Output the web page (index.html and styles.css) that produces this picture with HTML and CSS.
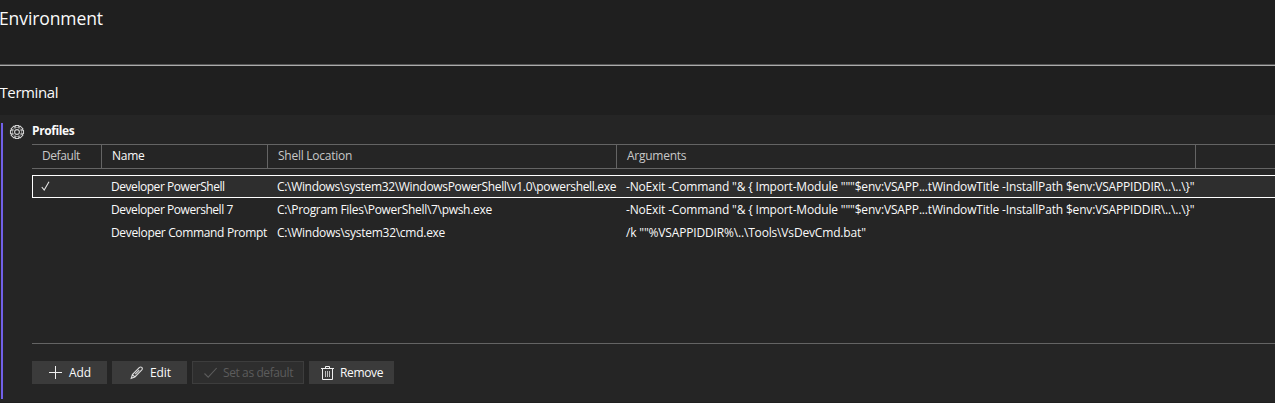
FILE: index.html
```
<!DOCTYPE html>
<html lang="en">
<head>
<meta charset="utf-8">
<title>Environment – Terminal</title>
<link rel="stylesheet" href="styles.css">
</head>
<body>
<header class="page-head"><h1><span>Environment</span></h1></header>
<h2 class="section-title"><span>Terminal</span></h2>
<main class="panel">
  <div class="accent"></div>
  <svg class="gear" viewBox="0 0 16 16" fill="none" stroke="#d2d2d2" stroke-width="1.100">
    <circle cx="8" cy="8" r="2.400"/>
    <path d="M6.200 3.600V1.500h3.600v2.100l1.500-1.400 2.500 2.500-1.400 1.500h2.100v3.600h-2.100l1.400 1.500-2.500 2.500-1.500-1.400v2.100H6.200v-2.100l-1.500 1.400-2.500-2.500 1.400-1.500H1.500V6.200h2.100L2.200 4.700l2.500-2.500z"/>
    <circle cx="8" cy="8" r="4.700" stroke-width=".8" stroke="#a8a8a8"/>
  </svg>
  <section class="profiles">
    <h3><span class="t-profiles">Profiles</span></h3>
    <div class="grid">
      <div class="row head">
        <div class="cell"><span class="t-default">Default</span></div>
        <div class="cell sorted"><span class="t-name">Name</span></div>
        <div class="cell"><span class="t-shell">Shell Location</span></div>
        <div class="cell"><span class="t-args">Arguments</span></div>
      </div>
      <div class="body">
        <div class="row selected">
          <div class="cell"><svg class="tick" viewBox="0 0 10 10" fill="none" stroke="#e4e4e4" stroke-width="1.100"><path d="M.8 6l2.400 3L8 .7"/></svg></div>
          <div class="cell"><span class="t-ps">Developer PowerShell</span></div>
          <div class="cell"><span class="t-path1">C:\Windows\system32\WindowsPowerShell\v1.0\powershell.exe</span></div>
          <div class="cell"><span class="t-cmd">-NoExit -Command "&amp; { Import-Module """$env:VSAPP...tWindowTitle -InstallPath $env:VSAPPIDDIR\..\..\}"</span></div>
        </div>
        <div class="row">
          <div class="cell"></div>
          <div class="cell"><span class="t-ps">Developer Powershell 7</span></div>
          <div class="cell"><span class="t-path2">C:\Program Files\PowerShell\7\pwsh.exe</span></div>
          <div class="cell"><span class="t-cmd">-NoExit -Command "&amp; { Import-Module """$env:VSAPP...tWindowTitle -InstallPath $env:VSAPPIDDIR\..\..\}"</span></div>
        </div>
        <div class="row">
          <div class="cell"></div>
          <div class="cell"><span class="t-prompt">Developer Command Prompt</span></div>
          <div class="cell"><span class="t-path3">C:\Windows\system32\cmd.exe</span></div>
          <div class="cell"><span class="t-cmd">/k ""%VSAPPIDDIR%\..\Tools\VsDevCmd.bat"</span></div>
        </div>
      </div>
    </div>
    <div class="actions">
      <button class="btn add"><svg viewBox="0 0 14 14" fill="none" stroke="#f0f0f0"><path d="M6.500 0v13M0 6.500h13"/></svg><span>Add</span></button>
      <button class="btn edit"><svg viewBox="0 0 14 14" fill="none" stroke="#dcdcdc" stroke-width="1.100"><path d="M1.200 12.300l1.200-3.700L9.500 1.500a1.500 1.500 0 0 1 2.300 0 1.500 1.500 0 0 1 0 2.300L4.900 11zM2.400 8.600L4.900 11M5.200 8.200l4-4"/></svg><span>Edit</span></button>
      <button class="btn set" disabled><svg viewBox="0 0 14 14" fill="none" stroke="#5c5c5c" stroke-width="1.100"><path d="M.5 7.500l3.700 3.700L12.700 2"/></svg><span>Set as default</span></button>
      <button class="btn remove"><svg viewBox="0 0 14 14" fill="none" stroke="#f0f0f0"><path d="M0 2.500h13M4.500 2.500v-2h4v2M1.500 2.500v11h10v-11"/><path d="M4.500 5v6M6.500 5v6M8.500 5v6" stroke="#bdbdbd"/></svg><span>Remove</span></button>
    </div>
  </section>
</main>
</body>
</html>
```
FILE: styles.css
```
* { box-sizing: border-box; }
body {
  margin: 0;
  height: 403px;
  overflow: hidden;
  display: flex;
  flex-direction: column;
  background: #1f1f1f;
  color: #fafafa;
  font: 12px/16px "Open Sans", "Noto Sans", sans-serif;
  white-space: nowrap;
}
h1, h2, h3 { margin: 0; font-weight: 400; }
.page-head {
  height: 66px;
  flex: none;
  padding-top: 6px;
  border-bottom: 1px solid #ababab;
  box-shadow: inset 0 -1px #565656;
}
h1 { font-size: 17.5px; line-height: 24px; letter-spacing: -.1px; text-indent: -1px; }
.section-title { height: 49px; flex: none; padding-top: 16px; font-size: 15px; line-height: 20px; letter-spacing: -.4px; text-indent: -.5px; }
.panel { flex: 1; min-height: 0; display: flex; background: #252525; border-bottom: 1px solid #1f1f1f; }
.accent { width: 2px; height: 276px; margin: 8px 0 0 1px; background: #7160e8; }
.gear { width: 16px; height: 16px; margin: 9px 7px 0 6px; flex: none; }
.profiles { flex: 1; min-width: 0; }
h3 { height: 29px; padding-top: 8px; font-weight: 700; font-size: 12px; line-height: 16px; }
.grid { height: 200px; border-top: 1px solid #646464; border-bottom: 1px solid #646464; overflow: hidden; }
.row { display: grid; grid-template-columns: 70px 166px 349px 579px 1fr; }
.head { height: 24px; border-bottom: 1px solid #646464; color: #c8c8c8; }
.head .cell { border-right: 1px solid #646464; padding: 3px 0 0 10px; }
.head .sorted { color: #fafafa; }
.body { padding-top: 6px; }
.body .row { height: 23px; line-height: 23px; }
.body .cell { padding-left: 9px; }
.selected { background: #2e2e2e; box-shadow: inset 1px 0 #fff, inset 0 1px #fff, inset 0 -1px #fff; }
.tick { display: block; width: 10px; height: 10px; margin-top: 6px; }
.actions { display: flex; gap: 5px; margin-top: 17px; }
.btn {
  height: 23px;
  display: flex;
  align-items: center;
  padding: 0 0 0 17px;
  border: 0;
  background: #3b3b3b;
  color: #fafafa;
  font: inherit;
  letter-spacing: -.1px;
}
.btn svg { width: 14px; height: 14px; flex: none; margin-right: 6px; }
.add, .edit { width: 75px; }
.edit { padding-left: 18px; }
.set { width: 112px; padding-left: 11px; border: 1px solid #3d3d3d; background: #2e2e2e; color: #5c5c5c; letter-spacing: -.4px; }
.set svg { margin-right: 5px; }
.remove { width: 85px; padding-left: 12px; letter-spacing: -.35px; }
.remove svg { margin-right: 5px; }
.t-profiles { letter-spacing: -.4px; }
.t-prompt { letter-spacing: -.34px; }
.t-default { letter-spacing: -.42px; }
.t-name, .t-shell, .t-args { letter-spacing: -.25px; }
.t-ps { letter-spacing: -.45px; }
.t-path1 { letter-spacing: -.32px; }
.t-path2 { letter-spacing: -.3px; }
.t-path3 { letter-spacing: -.27px; }
.t-cmd { letter-spacing: -.165px; }
```
